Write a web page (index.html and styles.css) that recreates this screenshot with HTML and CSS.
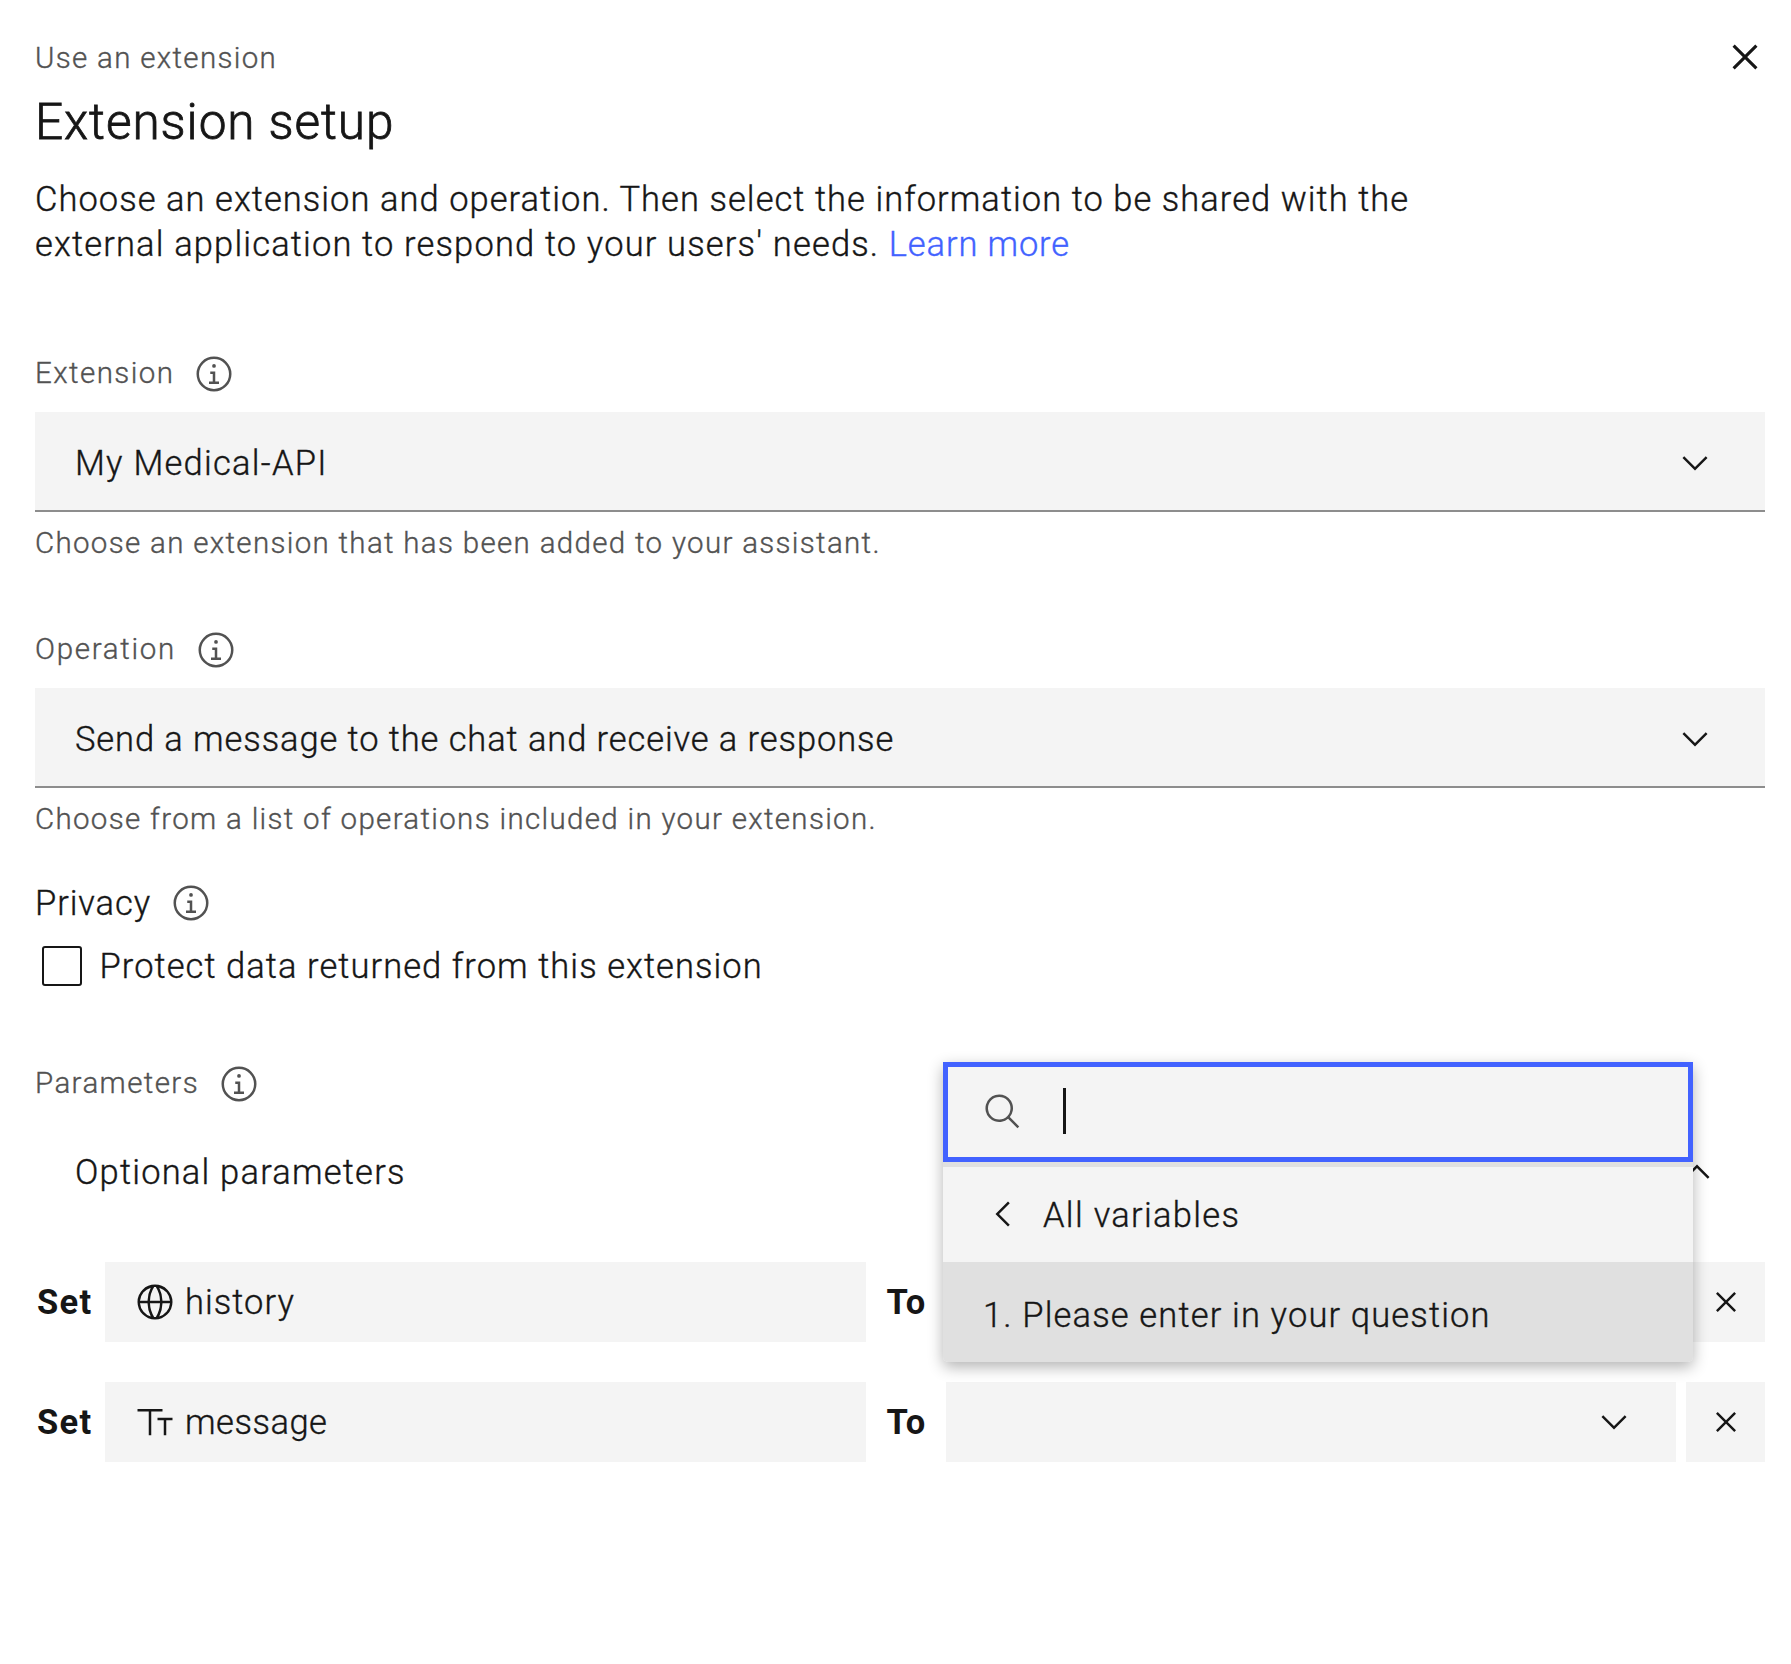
FILE: index.html
```html
<!DOCTYPE html>
<html lang="en">
<head>
<meta charset="utf-8">
<title>Extension setup</title>
<link rel="stylesheet" href="styles.css">
</head>
<body>
<svg class="defs" aria-hidden="true">
  <symbol id="info" viewBox="0 0 32 32"><path d="M17 22v-8h-4v2h2v6h-3v2h8v-2zM16 8a1.5 1.5 0 1 0 0 3 1.5 1.5 0 0 0 0-3z"/><path d="M16 30a14 14 0 1 1 14-14 14 14 0 0 1-14 14zm0-26a12 12 0 1 0 12 12A12 12 0 0 0 16 4z"/></symbol>
  <symbol id="close" viewBox="0 0 32 32"><path d="M24 9.4 22.6 8 16 14.6 9.4 8 8 9.4l6.6 6.6L8 22.6 9.4 24l6.6-6.6 6.6 6.6 1.4-1.4-6.6-6.6z"/></symbol>
  <symbol id="chevron-down" viewBox="0 0 16 16"><path d="M8 11 3 6l.7-.7L8 9.6l4.3-4.3.7.7z"/></symbol>
  <symbol id="chevron-up" viewBox="0 0 16 16"><path d="m8 5 5 5-.7.7L8 6.4l-4.3 4.3L3 10z"/></symbol>
  <symbol id="chevron-left" viewBox="0 0 16 16"><path d="m5 8 5-5 .7.7L6.4 8l4.3 4.3-.7.7z"/></symbol>
  <symbol id="search" viewBox="0 0 32 32"><path d="m29 27.586-7.552-7.552a11.018 11.018 0 1 0-1.414 1.414L27.586 29zM4 13a9 9 0 1 1 9 9 9.01 9.01 0 0 1-9-9z"/></symbol>
  <symbol id="globe" viewBox="0 0 32 32"><path d="M16 2a14 14 0 1 0 14 14A14.016 14.016 0 0 0 16 2zm12 13h-6a24.284 24.284 0 0 0-2.6-10.5A12.015 12.015 0 0 1 28 15zM16 28a5 5 0 0 1-.67-.05A21.85 21.85 0 0 1 12 17h8a21.85 21.85 0 0 1-3.33 10.95A5 5 0 0 1 16 28zM12 15a21.85 21.85 0 0 1 3.33-10.95 4.6 4.6 0 0 1 1.34 0A21.85 21.85 0 0 1 20 15zm.6-10.5A24.284 24.284 0 0 0 10 15H4a12.015 12.015 0 0 1 8.6-10.5zM4 17h6a24.284 24.284 0 0 0 2.6 10.5A12.015 12.015 0 0 1 4 17zm15.4 10.5A24.284 24.284 0 0 0 22 17h6a12.015 12.015 0 0 1-8.6 10.5z"/></symbol>
  <symbol id="text-type" viewBox="0 0 32 32"><path d="M2 5.5h20v2h-9v19h-2v-19H2z M18 12.5h12v2h-5v12h-2v-12h-5z"/></symbol>
</svg>
<main class="panel">
  <header class="header">
    <span class="eyebrow">Use an extension</span>
    <svg class="icon close"><use href="#close"/></svg>
  </header>
  <h1 class="title">Extension setup</h1>
  <p class="intro">Choose an extension and operation. Then select the information to be shared with the<br><span class="intro-end">external application to respond to your users' needs. </span><a class="link">Learn more</a></p>

  <section class="field-group">
    <div class="label-row"><span class="label extension-label">Extension</span><svg class="icon"><use href="#info"/></svg></div>
    <div class="field"><span class="extension-value">My Medical-API</span><svg class="icon ink"><use href="#chevron-down"/></svg></div>
    <div class="helper">Choose an extension that has been added to your assistant.</div>
  </section>
  <section class="field-group second">
    <div class="label-row"><span class="label operation-label">Operation</span><svg class="icon"><use href="#info"/></svg></div>
    <div class="field"><span class="operation-value">Send a message to the chat and receive a response</span><svg class="icon ink"><use href="#chevron-down"/></svg></div>
    <div class="helper">Choose from a list of operations included in your extension.</div>
  </section>

  <div class="label-row privacy"><span>Privacy</span><svg class="icon"><use href="#info"/></svg></div>
  <label class="check"><span class="box"></span><span>Protect data returned from this extension</span></label>

  <div class="label-row params"><span class="label params-label">Parameters</span><svg class="icon"><use href="#info"/></svg></div>
  <div class="accordion"><span>Optional parameters</span><svg class="icon ink"><use href="#chevron-up"/></svg></div>

  <div class="rows">
    <div class="row">
      <b class="set">Set</b>
      <div class="name"><svg class="icon ink"><use href="#globe"/></svg><span>history</span></div>
      <b class="to">To</b>
      <div class="value">
        <div class="menu">
          <div class="search"><svg class="icon"><use href="#search"/></svg><span class="caret"></span></div>
          <div class="back"><svg class="icon ink"><use href="#chevron-left"/></svg><span class="back-text">All variables</span></div>
          <div class="option">1. Please enter in your question</div>
        </div>
      </div>
      <div class="remove"><svg class="icon ink"><use href="#close"/></svg></div>
    </div>
    <div class="row">
      <b class="set">Set</b>
      <div class="name"><svg class="icon ink"><use href="#text-type"/></svg><span class="message">message</span></div>
      <b class="to">To</b>
      <div class="value"><svg class="icon ink"><use href="#chevron-down"/></svg></div>
      <div class="remove"><svg class="icon ink"><use href="#close"/></svg></div>
    </div>
  </div>
</main>
</body>
</html>
```
FILE: styles.css
```css
* { box-sizing: border-box; }
body {
  margin: 0;
  background: #fff;
  color: #161616;
  font: 300 34.5px/45px Roboto, "Liberation Sans", sans-serif;
  letter-spacing: 1.04px;
  -webkit-text-stroke: .35px;
}
.defs { position: absolute; width: 0; height: 0; }
.panel { padding: 38px 26px 0 35px; }
.icon { width: 40px; height: 40px; flex: none; fill: #525252; display: block; }
.icon.ink { fill: #161616; }
.icon, .row b { -webkit-text-stroke: 0; }

.header { display: flex; justify-content: space-between; height: 40px; }
.eyebrow, .label, .helper { font-size: 29.5px; line-height: 40px; color: #525252; letter-spacing: 1.32px; }
.icon.close { width: 50px; height: 50px; margin: -6px -5px 0 0; fill: #161616; }
.title { margin: 9px 0 20px; font-size: 49.5px; line-height: 70px; font-weight: 300; letter-spacing: .92px; -webkit-text-stroke: .8px; }
.intro { margin: 0; white-space: nowrap; }
.intro-end { letter-spacing: 1.15px; }
.link { color: #4262ff; letter-spacing: .85px; }

.field-group { margin-top: 87px; }
.field-group.second { margin-top: 67px; }
.label-row { display: flex; height: 40px; align-items: center; gap: 20px; }
.label { margin-bottom: 3px; }
.extension-label { letter-spacing: 1.45px; margin-right: -1px; }
.operation-label { letter-spacing: 1.7px; }
.params-label { letter-spacing: 1.4px; }
.field {
  display: flex; align-items: center; justify-content: space-between;
  height: 100px; margin-top: 18px; padding: 4px 50px 0 40px;
  background: #f4f4f4; border-bottom: 2px solid #8d8d8d;
}
.extension-value { letter-spacing: 1.25px; }
.operation-value { letter-spacing: .9px; }
.helper { margin-top: 11px; }

.privacy { margin-top: 44px; letter-spacing: .9px; }
.check { display: flex; align-items: center; height: 40px; margin-top: 23px; padding-left: 7px; gap: 17.5px; letter-spacing: 1.06px; }
.box { width: 40px; height: 40px; border: 2px solid #161616; border-radius: 3px; }
.params { margin-top: 78px; }
.accordion { display: flex; align-items: center; justify-content: space-between; height: 100px; margin-top: 18px; padding: 0 48px 0 40px; letter-spacing: 1.2px; }

.rows { display: flex; flex-direction: column; gap: 40px; margin-top: 40px; }
.row { display: grid; grid-template-columns: 70px 761px 80px 730px 89px; height: 80px; }
.row b { align-self: center; font-weight: 700; letter-spacing: .8px; }
.row .set { padding-left: 2px; letter-spacing: 1.3px; }
.to { padding-left: 20.5px; }
.name { display: flex; align-items: center; gap: 10px; padding-left: 30px; background: #f4f4f4; }
.message { letter-spacing: .5px; }
.value { position: relative; display: flex; align-items: center; justify-content: flex-end; padding-right: 42px; background: #f4f4f4; }
.remove { display: flex; align-items: center; justify-content: center; margin-left: 10px; background: #f4f4f4; }

.menu {
  position: absolute; left: -3px; top: -200px; width: 750px; height: 300px; z-index: 1;
  background: #f4f4f4; border-radius: 0 0 5px 5px; overflow: hidden;
  box-shadow: 0 5px 15px rgba(0, 0, 0, .3);
}
.search { display: flex; align-items: center; height: 100px; padding-left: 35px; border: 5px solid #4262ff; }
.caret { width: 3px; height: 46px; margin: 0 0 2px 40px; background: #161616; }
.back { display: flex; align-items: center; height: 100px; padding-left: 40px; gap: 20px; border-top: 5px solid #e0e0e0; }
.back .icon { margin-bottom: 1px; }
.back-text { padding-top: 2px; letter-spacing: 1.3px; }
.option { display: flex; align-items: center; height: 100px; padding: 6px 0 0 40px; background: #e0e0e0; letter-spacing: 1.15px; }
```
